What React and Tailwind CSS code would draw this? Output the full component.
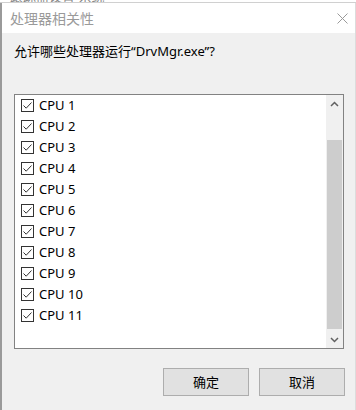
import React from 'react';

const cpus = Array.from({ length: 11 }, (_, i) => `CPU ${i + 1}`);

const CheckBox = () => (
    <span className="w-[13px] h-[13px] border border-[#333] bg-white flex items-center justify-center shrink-0">
        <svg width="11" height="11" viewBox="0 0 11 11">
            <path d="M1.5 5.5 L4.2 8.2 L9.5 2.5" fill="none" stroke="#333" strokeWidth="1" />
        </svg>
    </span>
);

const App = () => {
    return (
        <div
            className="w-[356px] h-[410px] bg-[#f0f0f0] overflow-hidden flex flex-col"
            style={{ fontFamily: '"Noto Sans", "Noto Sans CJK SC", sans-serif' }}
        >
            {/* background window peeking above */}
            <div className="h-[3px] bg-white overflow-hidden border-b border-[#d0d0d0]">
                <div className="-mt-[10px] pl-[10px] text-[13px] leading-[13px] text-[#888]">跟踪器设置 系统</div>
            </div>

            <div className="flex-1 flex flex-col border-l-2 border-[#9a9a9a] border-r border-r-[#dcdcdc]">
                {/* Title bar */}
                <div className="h-[30px] bg-white flex items-center justify-between pl-[8px] pr-[6px]">
                    <span className="text-[14px] text-[#9a9a9a]" style={{ fontFamily: '"Noto Sans CJK SC", sans-serif' }}>处理器相关性</span>
                    <svg width="11" height="11" viewBox="0 0 11 11" className="mr-[1px]">
                        <path d="M0.5 0.5 L10.5 10.5 M10.5 0.5 L0.5 10.5" stroke="#9a9a9a" strokeWidth="1" />
                    </svg>
                </div>

                {/* Prompt */}
                <div className="pl-[12px] pt-[9px] h-[61px] text-[13px] text-black leading-[18px]">
                    允许哪些处理器运行“DrvMgr.exe”?
                </div>

                {/* CPU list */}
                <div className="ml-[12px] w-[330px] h-[255px] border border-[#828282] bg-white flex">
                    <div className="flex-1 flex flex-col">
                        {cpus.map(c => (
                            <div key={c} className="h-[21px] flex items-center gap-[5px] pl-[6px] text-[13px] text-black">
                                <CheckBox />
                                <span>{c}</span>
                            </div>
                        ))}
                    </div>
                    <div className="w-[17px] bg-[#f0f0f0] flex flex-col">
                        <div className="h-[17px] flex items-center justify-center">
                            <svg width="9" height="6" viewBox="0 0 9 6">
                                <path d="M1 5 L4.5 1.5 L8 5" fill="none" stroke="#606060" strokeWidth="1.5" />
                            </svg>
                        </div>
                        <div className="flex-1 pt-[28px] pb-[2px] px-[1px]">
                            <div className="h-full bg-[#cdcdcd]" />
                        </div>
                        <div className="h-[17px] flex items-center justify-center">
                            <svg width="9" height="6" viewBox="0 0 9 6">
                                <path d="M1 1 L4.5 4.5 L8 1" fill="none" stroke="#606060" strokeWidth="1.5" />
                            </svg>
                        </div>
                    </div>
                </div>

                {/* Buttons */}
                <div className="flex justify-end gap-[10px] pr-[10px] mt-[19px]">
                    <button className="w-[86px] h-[28px] bg-[#e1e1e1] border border-[#adadad] text-[13px] text-black" style={{ fontFamily: '"Noto Sans CJK SC", sans-serif' }}>确定</button>
                    <button className="w-[86px] h-[28px] bg-[#e1e1e1] border border-[#adadad] text-[13px] text-black" style={{ fontFamily: '"Noto Sans CJK SC", sans-serif' }}>取消</button>
                </div>
            </div>
        </div>
    );
};

export default App;
